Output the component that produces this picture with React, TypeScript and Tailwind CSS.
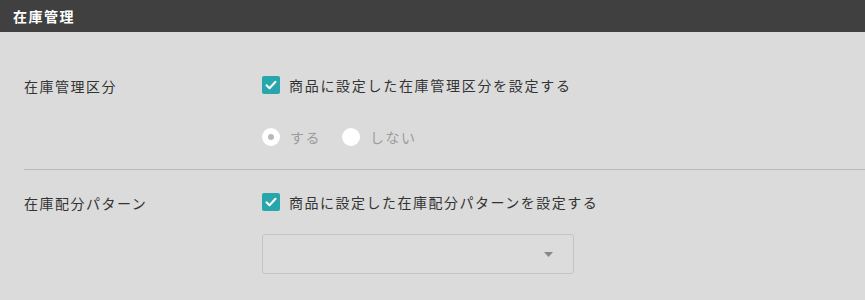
import React from "react";

const font = { fontFamily: '"Noto Sans CJK JP", "Noto Sans", sans-serif' };

function CheckBox() {
  return (
    <span className="flex h-[18px] w-[18px] shrink-0 items-center justify-center rounded-[2px] bg-[#27a6ab]">
      <svg width="14" height="14" viewBox="0 0 14 14" fill="none">
        <path d="M2.5 7.3l3 3 6-6.5" stroke="#fff" strokeWidth="2" strokeLinecap="round" strokeLinejoin="round" />
      </svg>
    </span>
  );
}

function Radio({ checked, label }: { checked?: boolean; label: string }) {
  return (
    <label className="flex items-center gap-[10px]">
      <span className="flex h-[18px] w-[18px] items-center justify-center rounded-full bg-white">
        {checked && <span className="h-[6px] w-[6px] rounded-full bg-[#b9b9bd]" />}
      </span>
      <span className="text-[14px] tracking-[1.5px] text-[#9c9c9c]">{label}</span>
    </label>
  );
}

export default function App() {
  return (
    <div className="h-[300px] w-[865px] overflow-hidden bg-[#dbdbdb]" style={font}>
      <div className="flex h-8 items-center bg-[#404040] px-[13px]">
        <h1 className="text-[14px] font-bold tracking-[1.5px] text-white">在庫管理</h1>
      </div>

      <div className="pl-6">
        {/* 在庫管理区分 */}
        <div className="flex pt-[41px]">
          <div className="w-[238px] pt-[1px] text-[14px] leading-6 tracking-[1.5px] text-[#333]">在庫管理区分</div>
          <div className="flex flex-col">
            <div className="flex h-6 items-center gap-[9px]">
              <CheckBox />
              <span className="text-[14px] tracking-[1.7px] text-[#333]">商品に設定した在庫管理区分を設定する</span>
            </div>
            <div className="mt-7 flex h-6 items-center gap-[21px]">
              <Radio checked label="する" />
              <Radio label="しない" />
            </div>
          </div>
        </div>

        <div className="mt-5 border-t border-[#b9b9b9]" />

        {/* 在庫配分パターン */}
        <div className="flex pt-5">
          <div className="w-[238px] pt-[1px] text-[14px] leading-6 tracking-[1.5px] text-[#333]">在庫配分パターン</div>
          <div className="flex flex-col">
            <div className="flex h-6 items-center gap-[9px]">
              <CheckBox />
              <span className="text-[14px] tracking-[1.5px] text-[#333]">商品に設定した在庫配分パターンを設定する</span>
            </div>
            <div className="mt-5 flex h-10 w-[312px] items-center justify-end rounded-[3px] border border-[#c4c4c4] bg-[#dcdcdc] pr-[20px]">
              <svg width="9" height="5" viewBox="0 0 9 5">
                <path d="M0 0h9L4.5 5z" fill="#888" />
              </svg>
            </div>
          </div>
        </div>
      </div>
    </div>
  );
}
